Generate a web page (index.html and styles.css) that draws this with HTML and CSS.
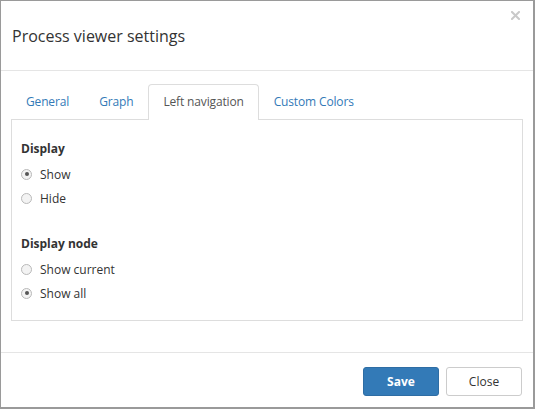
FILE: index.html
```html
<!DOCTYPE html>
<html>
<head>
<meta charset="utf-8">
<link rel="stylesheet" href="styles.css">
</head>
<body>
<div class="dialog">
  <div class="header">
    <h1 class="title">Process viewer settings</h1>
    <svg class="close-x" width="9" height="9" viewBox="0 0 9 9"><path d="M1 1L8 8M8 1L1 8" stroke="#c9c9c9" stroke-width="2" stroke-linecap="square"/></svg>
  </div>
  <div class="body">
    <ul class="tabs">
      <li class="tab">General</li>
      <li class="tab">Graph</li>
      <li class="tab active">Left navigation</li>
      <li class="tab">Custom Colors</li>
    </ul>
    <div class="pane">
      <div class="group">
        <div class="label">Display</div>
        <label class="radio"><span class="dot checked"></span>Show</label>
        <label class="radio"><span class="dot"></span>Hide</label>
      </div>
      <div class="group">
        <div class="label">Display node</div>
        <label class="radio"><span class="dot"></span>Show current</label>
        <label class="radio"><span class="dot checked"></span>Show all</label>
      </div>
    </div>
  </div>
  <div class="footer">
    <button class="btn primary">Save</button>
    <button class="btn">Close</button>
  </div>
</div>
</body>
</html>
```
FILE: styles.css
```css
html, body { margin: 0; padding: 0; background: #fff; }
body { font-family: "Open Sans", "Noto Sans", sans-serif; color: #333; font-size: 12px; }
.dialog {
  width: 535px; height: 409px; box-sizing: border-box;
  border: 1px solid #9a9a9a; border-right-width: 2px; border-bottom-width: 2px;
  display: flex; flex-direction: column; position: relative;
}
.header { height: 69px; border-bottom: 1px solid #e5e5e5; display: flex; align-items: center; padding-left: 11px; }
.title { margin: 0; font-size: 16px; font-weight: 400; color: #333; }
.close-x { position: absolute; right: 13px; top: 10px; }
.body { padding: 13px 10px 0 10px; height: 282px; box-sizing: border-box; border-bottom: 1px solid #e5e5e5; }
.tabs { list-style: none; margin: 0; padding: 0; display: flex; height: 35px; border-bottom: 1px solid #ddd; font-size: 12px; letter-spacing: -0.15px; }
.tab { padding: 0 14px; line-height: 34px; color: #337ab7; border: 1px solid transparent; border-bottom: none; border-radius: 4px 4px 0 0; }
.tab.active { color: #555; border-color: #ddd; background: #fff; margin-bottom: -1px; height: 35px; padding: 0 14px; }
.pane { border: 1px solid #ddd; border-top: none; height: 201px; box-sizing: border-box; padding: 20px 9px 0 9px; }
.group { margin-bottom: 25px; }
.label { font-weight: 700; margin-bottom: 5px; }
.radio { display: flex; align-items: center; height: 24px; }
.dot { width: 11px; height: 11px; border: 1px solid #b9b9b9; border-radius: 50%; background: #f3f3f3; margin-right: 8px; box-sizing: border-box; position: relative; }
.dot.checked::after { content: ""; position: absolute; left: 2.5px; top: 2.5px; width: 4px; height: 4px; border-radius: 50%; background: #555; }
.footer { flex: 1; display: flex; justify-content: flex-end; align-items: center; padding: 2px 11px 0 0; gap: 7px; }
.btn { width: 76px; height: 29px; border-radius: 3px; border: 1px solid #ccc; background: #fff; font-family: inherit; font-size: 12px; color: #333; }
.btn.primary { background: #337ab7; border-color: #2e6da4; color: #fff; font-weight: 700; }
```
